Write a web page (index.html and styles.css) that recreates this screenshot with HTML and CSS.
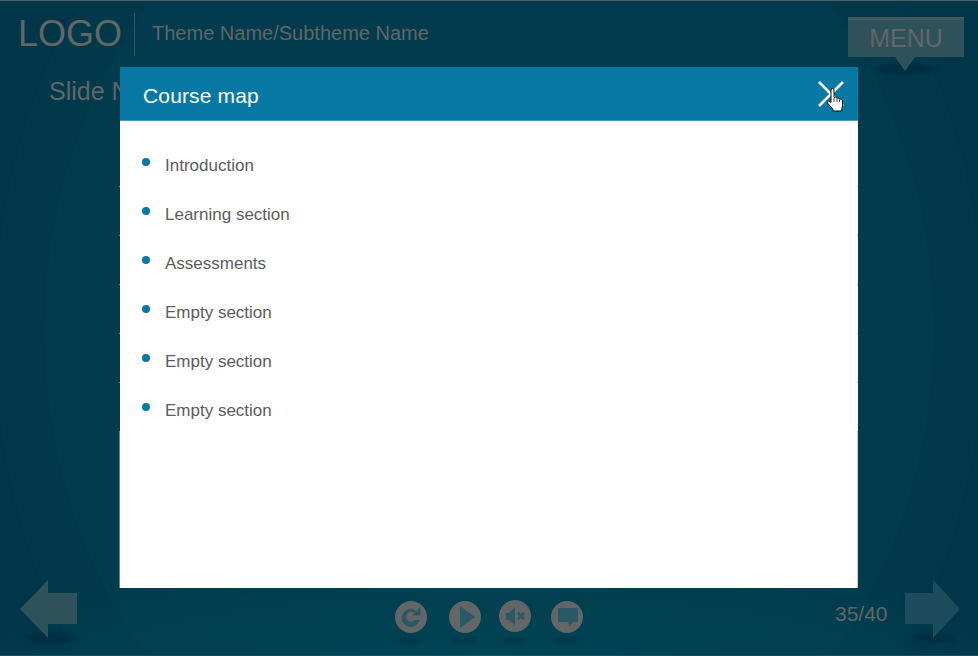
FILE: index.html
```html
<!DOCTYPE html>
<html lang="en">
<head>
<meta charset="utf-8">
<title>Course map</title>
<link rel="stylesheet" href="styles.css">
</head>
<body>
<div class="slide">
  <header class="top">
    <span class="logo">LOGO</span>
    <span class="theme">Theme Name/Subtheme Name</span>
    <div class="menu"><span class="menu-box">MENU</span></div>
  </header>
  <div class="slide-name">Slide Name</div>
  <footer class="bottom">
    <svg class="arrow" width="58" height="60" viewBox="0 0 58 60"><ellipse class="shade" cx="30" cy="58" rx="24" ry="6"/><path class="arrow-fill" d="M0 29 28 0V13H57V44H28V58Z"/></svg>
    <div class="controls">
      <svg class="ctl" width="34" height="46" viewBox="0 0 34 46"><ellipse class="shade" cx="15" cy="41" rx="13" ry="2.500"/><circle class="disc" cx="16" cy="17" r="16"/><path class="glyph" d="M24 14.500A9 9 0 1 0 24.500 20H20A5 5 0 1 1 19.500 13L17 15.500H25.500V7L22.500 10A9 9 0 0 0 22 9.500Z"/></svg>
      <svg class="ctl" width="34" height="46" viewBox="0 0 34 46"><ellipse class="shade" cx="15" cy="41" rx="13" ry="2.500"/><circle class="disc" cx="16" cy="17" r="16"/><path class="glyph" d="M11 6 26 17 11 28Z"/></svg>
      <svg class="ctl" width="34" height="46" viewBox="0 0 34 46"><ellipse class="shade" cx="15" cy="41" rx="13" ry="2.500"/><circle class="disc" cx="16" cy="16" r="16"/><path class="glyph" d="M7 13H10L16 7V25L10 20H7Z"/><path class="glyph-line" d="M19 13 25 19M25 13 19 19"/></svg>
      <svg class="ctl" width="34" height="46" viewBox="0 0 34 46"><ellipse class="shade" cx="15" cy="41" rx="13" ry="2.500"/><circle class="disc" cx="16" cy="17" r="16"/><path class="glyph" d="M8 8H26Q27 8 27 9V21Q27 22 26 22H22L18 26.500 17 22H8Q7 22 7 21V9Q7 8 8 8Z"/></svg>
    </div>
    <span class="count">35/40</span>
    <svg class="arrow arrow-next" width="56" height="60" viewBox="0 0 56 60"><ellipse class="shade" cx="28" cy="58" rx="22" ry="5"/><path class="arrow-fill" d="M55 29 28 0V13H0V44H28V58Z"/></svg>
  </footer>

  <section class="modal">
    <div class="modal-head">
      <h1 class="modal-title">Course map</h1>
      <svg class="close" width="26" height="26" viewBox="0 0 26 26"><path d="M1 1 25 25M25 1 1 25"/></svg>
    </div>
    <ul class="map">
      <li>Introduction</li>
      <li>Learning section</li>
      <li>Assessments</li>
      <li>Empty section</li>
      <li>Empty section</li>
      <li>Empty section</li>
    </ul>
  </section>
  <svg class="hand" width="18" height="24" viewBox="0 0 18 24"><path d="M5 2Q5 .5 6.500 .5T8 2V9.500Q10 8.500 11 10 13 9.500 13.500 11 15.500 10.500 16.500 12.500V18L15.500 23H7.500L6 20 1.500 15Q.5 12.500 3 13L5 14.500Z"/><path class="hand-line" d="M8 10V14M11 10.500V14M13.500 11.500V14"/></svg>
</div>
</body>
</html>
```
FILE: styles.css
```css
* { box-sizing: border-box; }
html, body { margin: 0; padding: 0; }
body { width: 978px; height: 656px; overflow: hidden; font-family: "Liberation Sans", Arial, sans-serif; }

.slide {
  position: relative;
  width: 978px;
  height: 656px;
  display: flex;
  flex-direction: column;
  border-top: 1px solid #4f5f66;
  border-bottom: 1px solid #0a5264;
  background:
    radial-gradient(ellipse 560px 90px at 489px 655px, rgba(0,72,88,.75) 0%, rgba(0,72,88,.4) 55%, transparent 100%),
    radial-gradient(ellipse 445px 510px at 489px 330px, #013b4d 0 99.7%, transparent 100%),
    radial-gradient(ellipse 495px 590px at 489px 330px, #01394b 0 99.7%, transparent 100%),
    #013649;
}

.top { display: flex; align-items: flex-start; height: 70px; padding: 12px 14px 0 18px; }
.logo {
  font-size: 36px;
  line-height: 42px;
  color: #626667;
  padding-right: 12px;
  border-right: 1px solid #3a5560;
  height: 43px;
}
.theme { font-size: 20px; line-height: 40px; color: #626667; margin-left: 17px; }

.menu { margin-left: auto; position: relative; margin-top: 4px; width: 116px; height: 58px; }
.menu::before {
  content: "";
  position: absolute;
  left: 27px; top: 46px;
  width: 60px; height: 12px;
  border-radius: 50%;
  background: #00283a;
  opacity: .6;
  filter: blur(2px);
}
.menu::after {
  content: "";
  position: absolute;
  left: 47px; top: 40px;
  border-style: solid;
  border-width: 14px 10px 0;
  border-color: #2f5159 transparent transparent;
}
.menu-box {
  display: block;
  position: relative;
  height: 40px;
  background: #2f5159;
  border-top: 3px solid #44595d;
  color: #626667;
  font-size: 25px;
  line-height: 37px;
  text-align: center;
  z-index: 1;
}

.slide-name { font-size: 25px; line-height: 30px; color: #626667; padding-left: 49px; margin-top: 5px; }

.bottom { margin-top: auto; display: flex; align-items: flex-start; height: 75px; padding: 0 18px 0 20px; }
.arrow { overflow: visible; flex: none; }
.arrow-fill { fill: #2f5159; }
.arrow-next .arrow-fill { fill: #1d4d5c; }
.shade { fill: #00283a; opacity: .6; filter: blur(2px); }
.controls { display: flex; margin-left: 317px; margin-top: 20px; }
.ctl { overflow: visible; flex: none; margin-right: 20px; }
.ctl:nth-child(2) { margin-right: 16px; }
.ctl:nth-child(3) { margin-right: 18px; }
.disc { fill: #626667; }
.glyph { fill: #2b5866; }
.glyph-line { fill: none; stroke: #2b5866; stroke-width: 2.500; }
.count { font-size: 21px; line-height: 24px; color: #626667; margin-left: 230px; margin-top: 22px; }
.arrow-next { margin-left: 17px; }

.modal {
  position: absolute;
  left: 120px; top: 66px;
  width: 738px; height: 521px;
  background: #fff;
}
.modal::before, .modal::after {
  content: "";
  position: absolute;
  top: 364px; bottom: 0;
  width: 1px;
}
.modal::before { left: -1px; background: #5f828f; }
.modal::after { right: 0; background: #c4c8c9; }
.modal-head {
  height: 54px;
  display: flex;
  align-items: center;
  justify-content: space-between;
  padding: 0 14px 0 23px;
  background: #0878a5;
  border-bottom: 1px solid #4f9dbb;
}
.modal-title { margin: 4px 0 0; font-weight: 400; font-size: 21px; letter-spacing: .15px; line-height: 50px; color: #fff; }
.close path { stroke: #fff; stroke-width: 2.500; fill: none; }

.map { list-style: none; margin: 0; padding: 20px 0 0 45px; }
.map li { position: relative; height: 49px; font-size: 17px; line-height: 49px; color: #5c5c5c; }
.map li::before {
  content: "";
  position: absolute;
  left: -23px; top: 17px;
  width: 8px; height: 8px;
  border-radius: 50%;
  background: #0878a5;
}
.map li::after {
  content: "";
  position: absolute;
  left: -46px; bottom: 3px;
  width: 739px; height: 1px;
  background: linear-gradient(90deg, #5f828f 1px, transparent 1px, transparent 738px, #c4c8c9 738px);
}

.hand { position: absolute; left: 826px; top: 87px; }
.hand path { fill: #fff; stroke: #111; stroke-width: 1; }
.hand .hand-line { fill: none; stroke-width: .8; }
```
